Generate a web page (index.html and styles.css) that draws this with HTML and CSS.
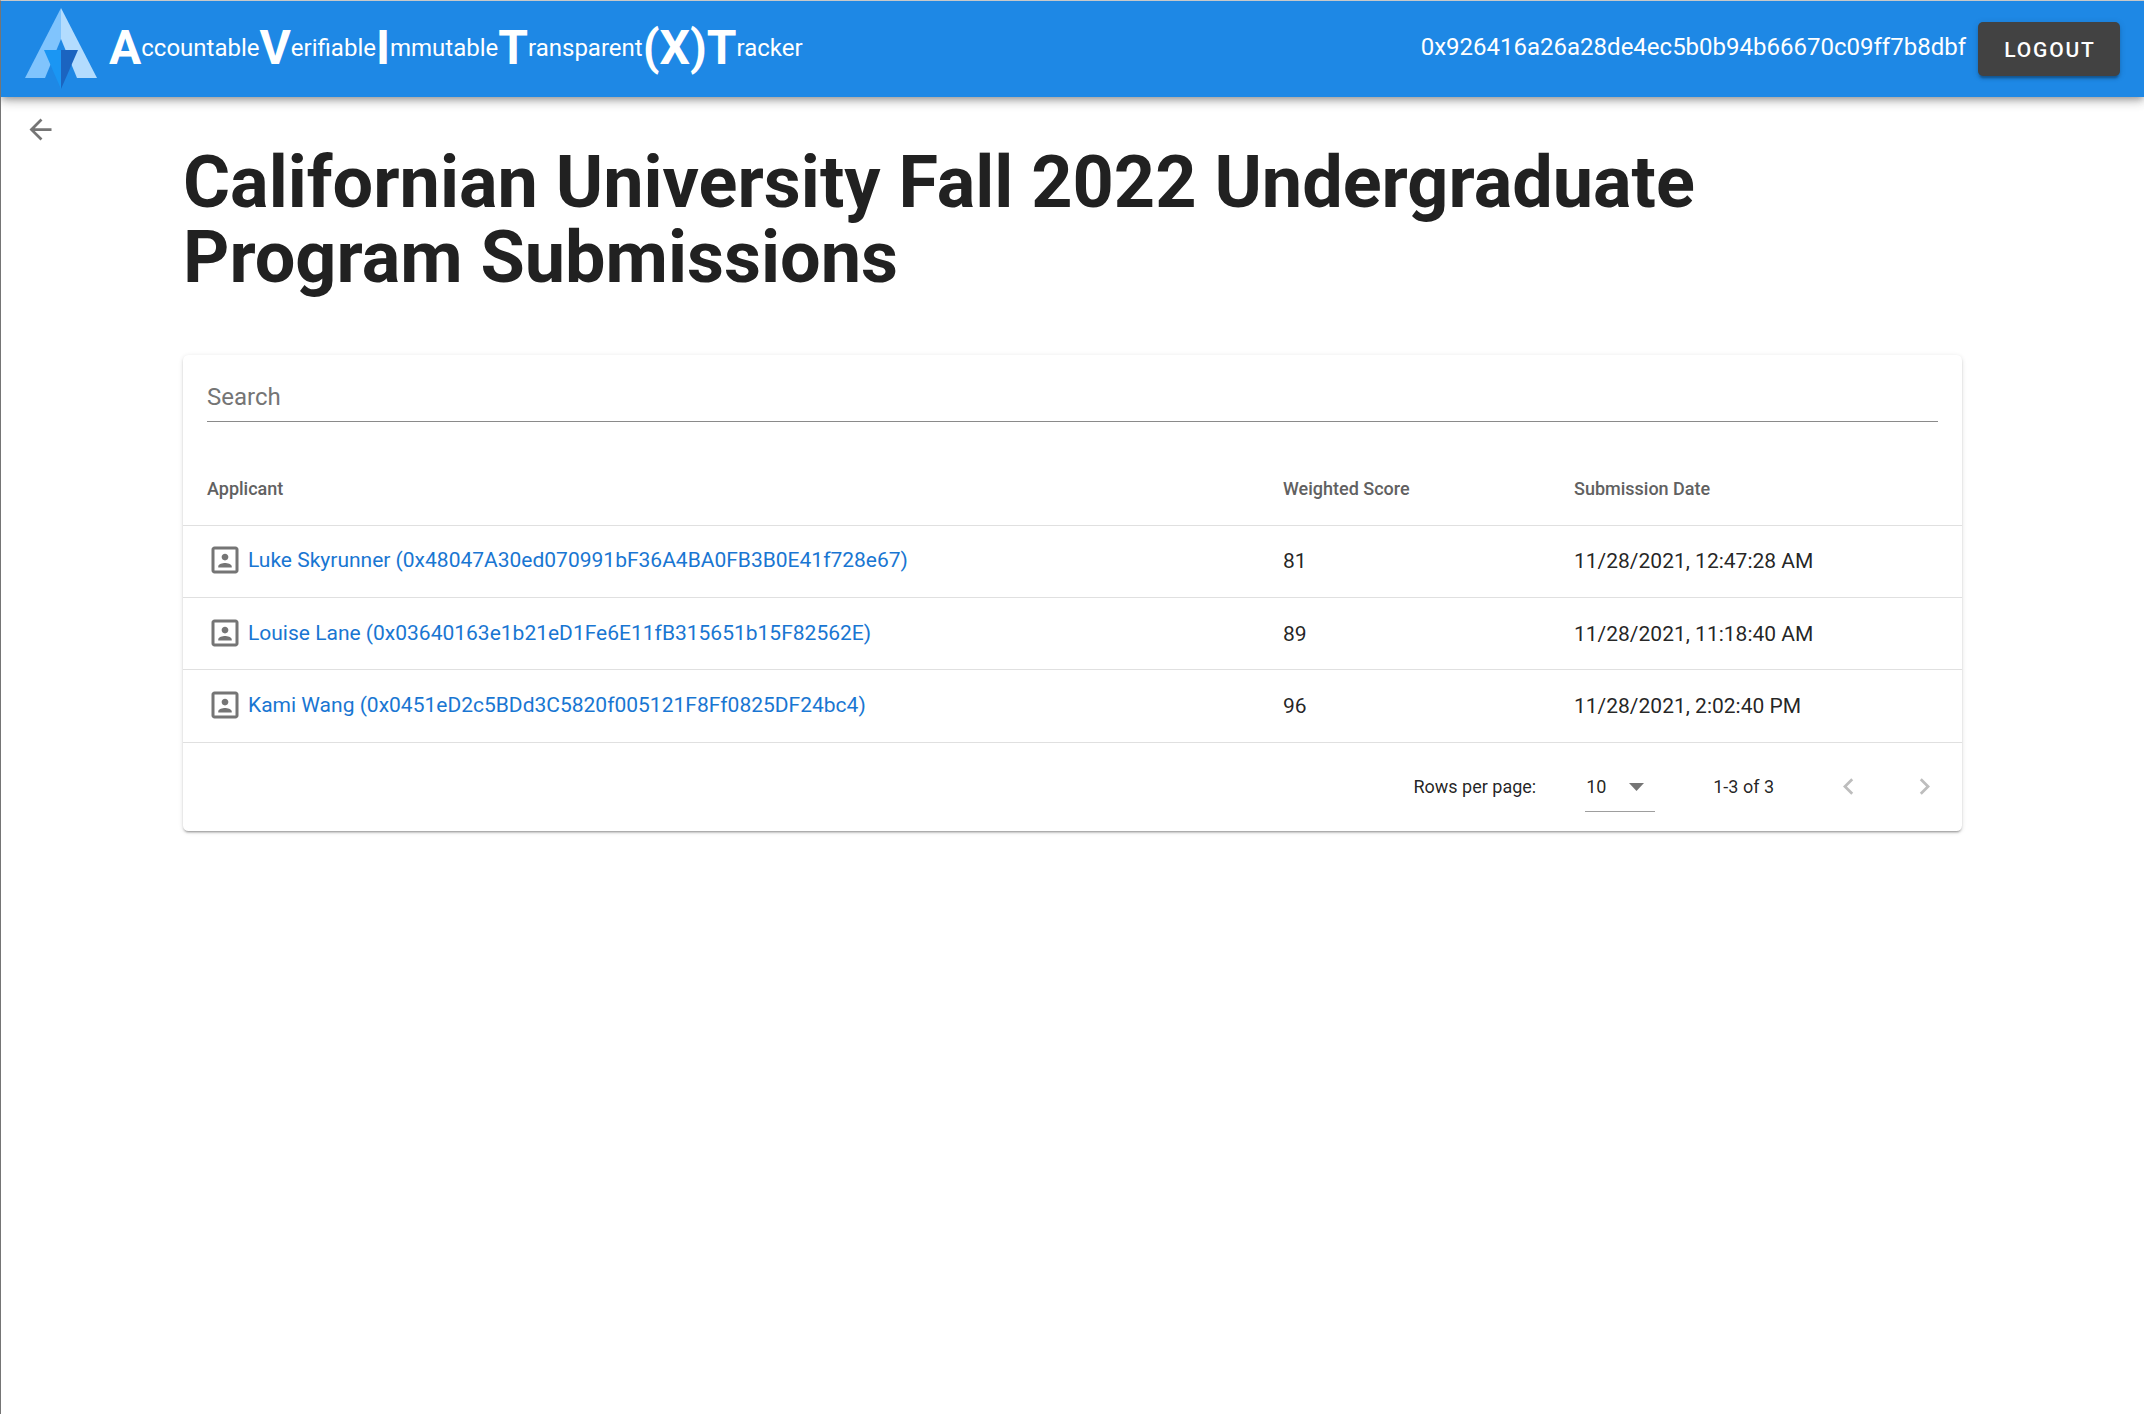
FILE: index.html
```html
<!DOCTYPE html>
<html lang="en">
<head>
<meta charset="utf-8">
<title>AVITXT</title>
<link rel="stylesheet" href="styles.css">
</head>
<body>
<header class="appbar">
  <svg class="logo" viewBox="0 0 72 81" aria-hidden="true">
    <polygon points="36,0 0,70 20,70 36,31" fill="#80c4fd"/>
    <polygon points="36,0 72,70 52,70 36,31" fill="#b3dcfe"/>
    <polygon points="19,42 36,42 36,81" fill="#1a96f3"/>
    <polygon points="53,42 36,42 36,81" fill="#1b64c0"/>
  </svg>
  <div class="brand">
    <span class="cap">A</span><span class="rest">ccountable</span><span class="cap">V</span><span class="rest">erifiable</span><span class="cap">I</span><span class="rest">mmutable</span><span class="cap">T</span><span class="rest">ransparent</span><span class="cap">(X)</span><span class="cap">T</span><span class="rest">racker</span>
  </div>
  <div class="account">0x926416a26a28de4ec5b0b94b66670c09ff7b8dbf</div>
  <button class="logout" type="button">Logout</button>
</header>
<main class="page">
  <div class="side">
    <svg class="back" viewBox="0 0 24 24" aria-hidden="true"><path d="M20 11H7.83l5.59-5.59L12 4l-8 8 8 8 1.41-1.41L7.83 13H20v-2z"/></svg>
  </div>
  <div class="content">
    <h1 class="title">Californian University Fall 2022 Undergraduate Program Submissions</h1>
    <section class="card">
      <div class="search"><span class="search-text">Search</span></div>
      <div class="row head">
        <div class="c1">Applicant</div><div class="c2">Weighted Score</div><div class="c3">Submission Date</div>
      </div>
      <div class="row">
        <div class="c1 applicant"><svg class="person" viewBox="0 0 24 24" aria-hidden="true"><path d="M12 12.25c1.24 0 2.25-1.01 2.25-2.25S13.24 7.75 12 7.75 9.75 8.76 9.75 10s1.01 2.25 2.25 2.25zm4.5 4c0-1.5-3-2.25-4.5-2.25s-4.5.75-4.5 2.25V17h9v-.75zM19 3H5c-1.1 0-2 .9-2 2v14c0 1.1.9 2 2 2h14c1.1 0 2-.9 2-2V5c0-1.1-.9-2-2-2zm0 16H5V5h14v14z"/></svg><a class="link" href="#">Luke Skyrunner (0x48047A30ed070991bF36A4BA0FB3B0E41f728e67)</a></div>
        <div class="c2">81</div><div class="c3">11/28/2021, 12:47:28 AM</div>
      </div>
      <div class="row">
        <div class="c1 applicant"><svg class="person" viewBox="0 0 24 24" aria-hidden="true"><path d="M12 12.25c1.24 0 2.25-1.01 2.25-2.25S13.24 7.75 12 7.75 9.75 8.76 9.75 10s1.01 2.25 2.25 2.25zm4.5 4c0-1.5-3-2.25-4.5-2.25s-4.5.75-4.5 2.25V17h9v-.75zM19 3H5c-1.1 0-2 .9-2 2v14c0 1.1.9 2 2 2h14c1.1 0 2-.9 2-2V5c0-1.1-.9-2-2-2zm0 16H5V5h14v14z"/></svg><a class="link" href="#">Louise Lane (0x03640163e1b21eD1Fe6E11fB315651b15F82562E)</a></div>
        <div class="c2">89</div><div class="c3">11/28/2021, 11:18:40 AM</div>
      </div>
      <div class="row">
        <div class="c1 applicant"><svg class="person" viewBox="0 0 24 24" aria-hidden="true"><path d="M12 12.25c1.24 0 2.25-1.01 2.25-2.25S13.24 7.75 12 7.75 9.75 8.76 9.75 10s1.01 2.25 2.25 2.25zm4.5 4c0-1.5-3-2.25-4.5-2.25s-4.5.75-4.5 2.25V17h9v-.75zM19 3H5c-1.1 0-2 .9-2 2v14c0 1.1.9 2 2 2h14c1.1 0 2-.9 2-2V5c0-1.1-.9-2-2-2zm0 16H5V5h14v14z"/></svg><a class="link" href="#">Kami Wang (0x0451eD2c5BDd3C5820f005121F8Ff0825DF24bc4)</a></div>
        <div class="c2">96</div><div class="c3">11/28/2021, 2:02:40 PM</div>
      </div>
      <div class="pager">
        <span class="rows-label">Rows per page:</span>
        <span class="select"><span>10</span><svg class="caret" viewBox="0 0 15 8" aria-hidden="true"><polygon points="0,0 15,0 7.5,8"/></svg></span>
        <span class="range">1-3 of 3</span>
        <svg class="chev" viewBox="0 0 24 24" aria-hidden="true"><path d="M15.41 7.41L14 6l-6 6 6 6 1.41-1.41L10.83 12z"/></svg>
        <svg class="chev" viewBox="0 0 24 24" aria-hidden="true"><path d="M10 6L8.59 7.41 13.17 12l-4.58 4.59L10 18l6-6z"/></svg>
      </div>
    </section>
  </div>
</main>
</body>
</html>
```
FILE: styles.css
```css
* { box-sizing: border-box; }
html, body { margin: 0; height: 100%; }
body {
  background: #fff;
  color: rgba(0,0,0,.87);
  font-family: Roboto, "Liberation Sans", sans-serif;
  border-left: 1px solid #757575;
  border-top: 1px solid #c8c8c8;
  overflow: hidden;
}
.appbar {
  height: 96px;
  background: #1e88e5;
  color: #fff;
  display: flex;
  align-items: center;
  padding: 0 24px;
  box-shadow: 0 3px 6px -1px rgba(0,0,0,.25), 0 5px 10px rgba(0,0,0,.14), 0 1px 14px rgba(0,0,0,.12);
  position: relative;
}
.logo { width: 72px; height: 81px; margin-top: -1px; flex: none; }
.brand { display: flex; align-items: center; margin-left: 12px; margin-top: -2px; }
.cap { font-size: 48px; font-weight: 700; line-height: 56px; }
.rest { font-size: 24px; line-height: 32px; }
.account { margin-left: auto; font-size: 24px; margin-top: -4px; }
.logout {
  margin-left: 12px;
  width: 142px;
  height: 54px;
  border: 0;
  border-radius: 5px;
  padding: 2px 0 0 2px;
  background: #424242;
  color: #fff;
  font: 500 21px Roboto, sans-serif;
  letter-spacing: 1.8px;
  text-transform: uppercase;
  box-shadow: 0 4px 2px -2px rgba(0,0,0,.2), 0 3px 3px rgba(0,0,0,.14), 0 1px 7px rgba(0,0,0,.12);
}
.page { display: flex; align-items: flex-start; }
.side { width: 182px; flex: none; padding: 16px 0 0 23px; }
.back { display: block; width: 33px; height: 33px; fill: #757575; }
.content { width: 1779px; padding-top: 48px; }
.title { margin: 0 0 60px; font-size: 72px; line-height: 75px; font-weight: 700; color: #212121; }
.card {
  background: #fff;
  border-radius: 5.5px;
  box-shadow: 0 3px 1.5px -2px rgba(0,0,0,.2), 0 2px 2px rgba(0,0,0,.14), 0 1px 5px rgba(0,0,0,.12);
}
.search { margin: 0 24px; height: 67px; border-bottom: 1.4px solid #8a8a8a; padding-top: 28px; }
.search-text { font-size: 24px; line-height: 29px; font-weight: 400; color: #757575; display: block; }
.row {
  display: grid;
  grid-template-columns: 1076px 291px 1fr;
  align-items: center;
  height: 72.4px;
  padding-left: 24px;
  border-bottom: 1.4px solid #e0e0e0;
  font-size: 21px;
}
.head { height: 103.5px; padding-top: 31px; font-size: 18px; font-weight: 500; color: #616161; }
.applicant { display: flex; align-items: center; margin-top: -2px; }
.person { width: 36px; height: 36px; flex: none; fill: #757575; margin-right: 5px; }
.link { color: #1976d2; text-decoration: none; }
.pager { display: flex; align-items: center; height: 88px; padding-right: 21px; justify-content: flex-end; font-size: 18px; }
.rows-label { margin-right: 49px; }
.select { display: flex; align-items: center; width: 70px; height: 50px; padding-left: 1px; border-bottom: 1.4px solid #9e9e9e; margin-right: 58px; }
.select .caret { width: 15px; height: 8px; margin: 2px 0 0 23px; fill: #757575; }
.range { margin-right: 58px; }
.chev { width: 33px; height: 33px; fill: #bdbdbd; }
.chev + .chev { margin-left: 43px; }
```
